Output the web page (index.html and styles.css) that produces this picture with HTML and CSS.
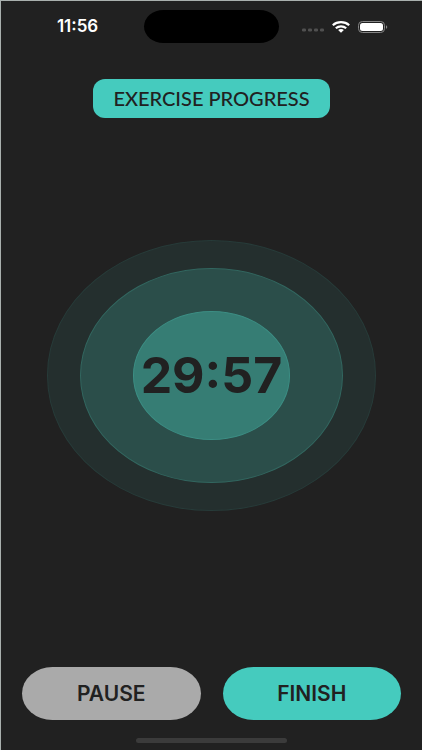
FILE: index.html
```
<!DOCTYPE html>
<html lang="en">
<head>
    <meta charset="UTF-8">
    <meta name="viewport" content="width=device-width, initial-scale=1.0">
    <title>Exercise Progress</title>
    <link rel="stylesheet" href="styles.css">
</head>
<body>
    <header class="status-bar">
        <time class="clock">11:56</time>
        <div class="island"></div>
        <div class="status-icons">
            <svg class="signal" width="22" height="4" viewBox="0 0 22 4" fill="#505050">
                <rect x="0" y=".5" width="4" height="3" rx="1.2"/>
                <rect x="6" y=".5" width="4" height="3" rx="1.2"/>
                <rect x="12" y=".5" width="4" height="3" rx="1.2"/>
                <rect x="18" y=".5" width="4" height="3" rx="1.2"/>
            </svg>
            <svg width="18" height="12" viewBox="0 0 18 12" fill="none" stroke="#fff" stroke-width="2.2">
                <path d="M.8 4.2C5.3 .2 12.7 .2 17.2 4.2"/>
                <path d="M3.8 7.3C6.7 4.7 11.3 4.7 14.2 7.3"/>
                <path d="M9 11.7L6.1 9.1C7.7 7.7 10.3 7.7 11.9 9.1Z" fill="#fff" stroke="none"/>
            </svg>
            <svg width="30" height="12" viewBox="0 0 30 12">
                <rect x=".5" y=".5" width="26" height="11" rx="3.8" fill="none" stroke="#858585"/>
                <rect x="2" y="2" width="23" height="8" rx="2.5" fill="#fff"/>
                <path d="M28 4.2C29.7 4.7 29.7 7.3 28 7.8Z" fill="#858585"/>
            </svg>
        </div>
    </header>

    <main class="workout">
        <h1 class="title">EXERCISE PROGRESS</h1>

        <div class="timer">
            <div class="ring ring-outer">
                <div class="ring ring-middle">
                    <div class="ring ring-inner">
                        <time class="time-left">29:57</time>
                    </div>
                </div>
            </div>
        </div>

        <div class="actions">
            <button type="button" class="btn btn-pause">PAUSE</button>
            <button type="button" class="btn btn-finish">FINISH</button>
        </div>
    </main>

    <div class="home-indicator"></div>
</body>
</html>
```

FILE: styles.css
```
* {
    box-sizing: border-box;
}

body {
    display: flex;
    flex-direction: column;
    min-height: 100vh;
    margin: 0;
    border-top: 1px solid #a9b0ae;
    border-left: 1px solid #a9b0ae;
    background-color: #212121;
    color: #212121;
    font-family: Inter, "Liberation Sans", sans-serif;
}

.status-bar {
    display: grid;
    grid-template-columns: 1fr 32% 1fr;
    align-items: center;
    padding-top: 9px;
}

.clock {
    padding-left: 10px;
    color: #fff;
    font-size: 17px;
    font-weight: 600;
    line-height: 33px;
    text-align: center;
}

.island {
    height: 33px;
    border-radius: 20px / 17px;
    background-color: #000;
}

.status-icons {
    display: flex;
    align-items: center;
    justify-content: flex-end;
    gap: 8px;
    padding-right: 34px;
}

.signal {
    margin-top: 6px;
}

.workout {
    display: flex;
    flex: 1;
    flex-direction: column;
    align-items: center;
    padding: 36px 21px 18px;
}

.title {
    margin: 0;
    padding: 0 20px;
    border-radius: 12px;
    background-color: #45cbbe;
    font-family: Lato, sans-serif;
    font-size: 20px;
    font-weight: 500;
    line-height: 39px;
}

.timer {
    display: flex;
    flex: 1;
    align-items: center;
    justify-content: center;
    width: 100%;
    padding-bottom: 34px;
}

.ring {
    display: flex;
    flex-shrink: 0;
    align-items: center;
    justify-content: center;
    aspect-ratio: 328 / 269;
    border: 1px solid;
    border-radius: 50%;
}

.ring-outer {
    width: 87%;
    border-color: #273b39;
    background-color: #242f2e;
}

.ring-middle {
    width: 80%;
    border-color: #32665f;
    background-color: #2b4e4a;
}

.ring-inner {
    width: 60%;
    border-color: #3c8d83;
    background-color: #367d74;
}

.time-left {
    font-size: 50px;
    font-weight: 700;
    line-height: 50px;
}

.actions {
    display: flex;
    gap: 22px;
    width: 100%;
}

.btn {
    flex: 1;
    padding: 0;
    border: none;
    border-radius: 31px / 27px;
    color: #212121;
    font-family: inherit;
    font-size: 21px;
    font-weight: 600;
    line-height: 53px;
    cursor: pointer;
}

.btn-pause {
    background-color: #aaa;
}

.btn-finish {
    background-color: #45cbbe;
}

.home-indicator {
    width: 36%;
    height: 5px;
    margin: 0 auto 7px;
    border-radius: 3px;
    background-color: #3b3b3b;
}
```
